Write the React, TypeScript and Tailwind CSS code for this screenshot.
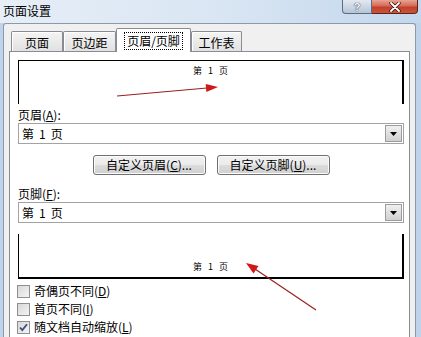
import React from 'react';

const FONT = '"Noto Sans CJK SC", "Liberation Sans", sans-serif';

const Tab: React.FC<{ label: string; width: string; selected?: boolean }> = ({ label, width, selected }) => {
  if (selected) {
    return (
      <div className={`relative z-10 ${width} h-[24px] -mb-px flex justify-center pt-[4px] bg-white border border-b-0 border-[#898c95] rounded-t-[2px]`}>
        <span className="h-[16px] px-[2px] text-[12px] leading-[15px] outline outline-1 outline-dotted outline-black">{label}</span>
      </div>
    );
  }
  return (
    <div className={`${width} h-[20px] flex justify-center pt-[3px] border border-b-0 border-[#898c95] rounded-t-[2px] bg-gradient-to-b from-[#f4f4f4] to-[#e1e1e1] shadow-[inset_1px_1px_0_#ffffff]`}>
      <span className="text-[12px] leading-[15px]">{label}</span>
    </div>
  );
};

const PageText: React.FC = () => (
  <div className="flex justify-center gap-[6px] text-[9px] leading-[10px] text-black">
    <span>第</span>
    <span>1</span>
    <span>页</span>
  </div>
);

const Combo: React.FC = () => (
  <div className="h-[21px] flex items-stretch border border-[#a3a3a3] bg-white">
    <div className="flex-1 flex items-center gap-[5px] pl-[3px] text-[12px] leading-[14px]">
      <span>第</span>
      <span>1</span>
      <span>页</span>
    </div>
    <div className="w-[17px] m-px flex items-center justify-center border border-[#9c9c9c] bg-gradient-to-b from-[#f0f0f0] to-[#cfcfcf]">
      <svg width="7" height="4" viewBox="0 0 7 4">
        <path d="M0 0h7L3.5 4z" fill="#000" />
      </svg>
    </div>
  </div>
);

const WinButton: React.FC<{ children: React.ReactNode }> = ({ children }) => (
  <div className="w-[113px] h-[20px] flex items-center justify-center rounded-[3px] border border-[#707070] bg-[linear-gradient(#f2f2f2_0%,#ebebeb_50%,#dddddd_50%,#cfcfcf_100%)] shadow-[inset_0_0_0_1px_#fbfbfb] text-[12px] leading-[14px]">
    {children}
  </div>
);

const Check: React.FC<{ checked?: boolean; children: React.ReactNode }> = ({ checked, children }) => (
  <div className="h-[18px] flex items-center gap-[4px] -ml-px">
    <div className="w-[13px] h-[13px] border border-[#8f8f8f] bg-gradient-to-br from-[#d8d8d8] to-[#f4f4f4] flex items-center justify-center">
      {checked && (
        <svg width="9" height="9" viewBox="0 0 9 9">
          <path d="M1 4.5l2.3 2.6L8 1.2" fill="none" stroke="#3b4f7e" strokeWidth="1.8" />
        </svg>
      )}
    </div>
    <span className="text-[12px] leading-[14px]">{children}</span>
  </div>
);

export default function App() {
  return (
    <div className="relative w-[421px] h-[337px] overflow-hidden flex flex-col bg-[#bfd4eb] text-black" style={{ fontFamily: FONT }}>
      {/* Title bar */}
      <div className="h-[23px] shrink-0 flex justify-between bg-gradient-to-r from-[#e6eef7] via-[#dae6f3] to-[#c3d7ed]">
        <span className="pl-[3px] pt-[3px] text-[12px] leading-[16px]">页面设置</span>
        <div className="flex h-[14px] mr-[3px]">
          <div className="w-[30px] flex items-center justify-center border border-t-0 border-[#5d6b7e] rounded-bl-[4px] bg-gradient-to-b from-[#e2e9f2] to-[#b7c5d7]">
            <span className="font-['Liberation_Sans',sans-serif] text-[11px] leading-[12px] font-bold text-white [text-shadow:0_0_1px_#25303d,0_0_1px_#25303d]">?</span>
          </div>
          <div className="w-[46px] flex items-center justify-center border border-t-0 border-l-0 border-[#5a2218] rounded-br-[4px] bg-[linear-gradient(#e8a394_0%,#d46b57_45%,#c2402b_55%,#c9533d_100%)]">
            <svg width="12" height="10" viewBox="0 0 12 10">
              <path d="M2 1l8 8M10 1l-8 8" stroke="#3a1510" strokeWidth="3.4" strokeLinecap="round" />
              <path d="M2 1l8 8M10 1l-8 8" stroke="#ffffff" strokeWidth="1.8" strokeLinecap="round" />
            </svg>
          </div>
        </div>
      </div>

      {/* Client area */}
      <div className="flex-1 min-h-0 flex flex-col ml-[3px] mr-[5px] border border-b-0 border-[#8c99aa] rounded-t-[3px] bg-[#f0f0f0] px-[5px] pt-[4px]">
        {/* Tabs */}
        <div className="h-[23px] shrink-0 flex items-end pl-[2px]">
          <Tab label="页面" width="w-[52px]" />
          <Tab label="页边距" width="w-[53px]" />
          <Tab label="页眉/页脚" width="w-[75px]" selected />
          <Tab label="工作表" width="w-[51px]" />
        </div>

        {/* Tab page */}
        <div className="flex-1 flex flex-col border border-b-0 border-[#898c95] bg-white pl-[8px] pr-[5px] pt-[8px]">
          <div className="h-[44px] shrink-0 border-t border-l border-r-2 border-black pt-[5px]">
            <PageText />
          </div>

          <div className="mt-[3px] h-[16px] text-[12px] leading-[16px]">页眉(<u>A</u>):</div>
          <Combo />

          <div className="mt-[11px] flex justify-center gap-[11px]">
            <WinButton>自定义页眉(<u>C</u>)...</WinButton>
            <WinButton>自定义页脚(<u>U</u>)...</WinButton>
          </div>

          <div className="mt-[11px] h-[16px] text-[12px] leading-[16px]">页脚(<u>F</u>):</div>
          <Combo />

          <div className="mt-[11px] h-[45px] shrink-0 flex flex-col justify-end border-l border-r-2 border-b-2 border-black pb-[5px]">
            <PageText />
          </div>

          <div className="mt-[3px] flex flex-col">
            <Check>奇偶页不同(<u>D</u>)</Check>
            <Check>首页不同(<u>I</u>)</Check>
            <Check checked>随文档自动缩放(<u>L</u>)</Check>
          </div>
        </div>
      </div>

      {/* Red annotation arrows */}
      <svg className="absolute inset-0 pointer-events-none" width="421" height="337" viewBox="0 0 421 337">
        <line x1="117" y1="96" x2="207" y2="88" stroke="#9a1f1f" strokeWidth="1.2" />
        <polygon points="218,87 206.4,92.1 205.7,84.1" fill="#d01818" />
        <line x1="316" y1="310" x2="255" y2="269" stroke="#9a1f1f" strokeWidth="1.2" />
        <polygon points="246,263 258.5,266 253.5,273.4" fill="#d01818" />
      </svg>
    </div>
  );
}
